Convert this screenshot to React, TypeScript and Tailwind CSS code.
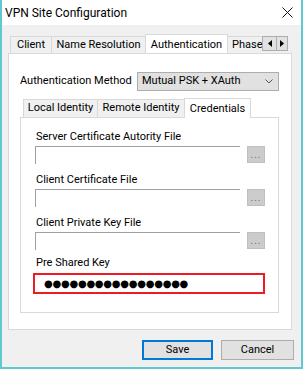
import React from 'react';

const font = { fontFamily: 'Roboto, "Liberation Sans", sans-serif' };

// A file row: label, sunken edit box and the browse button
function FileField({ label }: { label: string }) {
  return (
    <div className="flex flex-col">
      <div className="h-[16px] leading-[16px] pl-[15px] text-black whitespace-nowrap">{label}</div>
      <div className="flex items-start mt-[1px] pl-[14px]">
        <div className="w-[205px] h-[18px] bg-white border-t border-l border-[#a0a0a0]" />
        <div className="ml-[7px] w-[18px] h-[17px] bg-[#cccccc] border border-[#bfbfbf] flex items-center justify-center text-[10px] leading-none text-[#6d6d6d] tracking-[1px]">
          ...
        </div>
      </div>
    </div>
  );
}

export default function App() {
  return (
    <div
      className="w-[303px] h-[369px] flex flex-col border-l-2 border-r-2 border-b-2 border-[#5fc9cf] bg-[#f0f0f0] text-[11px] text-black overflow-hidden whitespace-nowrap"
      style={font}
    >
      {/* Title bar */}
      <div className="h-[25px] bg-white flex items-center justify-between pl-[3px] pr-[8px] shrink-0">
        <span className="text-[12px] leading-none text-black">VPN Site Configuration</span>
        <svg width="11" height="11" viewBox="0 0 11 11">
          <path d="M0.5 0.5 L10.5 10.5 M10.5 0.5 L0.5 10.5" stroke="#111" strokeWidth="1" />
        </svg>
      </div>

      {/* Body */}
      <div className="flex flex-col pt-[8px]">
        {/* Outer tab strip */}
        <div className="flex items-end h-[20px] pl-[8px]">
          <div className="flex items-end w-[252px] overflow-hidden">
            <div className="w-[42px] h-[17px] shrink-0 border border-b-0 border-[#d9d9d9] bg-[#f0f0f0] flex items-center justify-center">Client</div>
            <div className="-ml-px w-[94px] h-[17px] shrink-0 border border-b-0 border-r-0 border-[#d9d9d9] bg-[#f0f0f0] flex items-center justify-center">Name Resolution</div>
            <div className="w-[83px] h-[20px] shrink-0 border border-b-0 border-[#d9d9d9] bg-white relative z-10 -mb-px flex items-start pt-[2px] justify-center">Authentication</div>
            <div className="-ml-px w-[50px] h-[17px] shrink-0 border border-b-0 border-[#d9d9d9] bg-[#f0f0f0] flex items-center pl-[4px]">Phase 1</div>
          </div>
          <div className="flex mb-[2px]">
            <div className="w-[15px] h-[15px] border border-[#adadad] bg-[#e1e1e1] flex items-center justify-center">
              <svg width="4" height="7" viewBox="0 0 4 7"><path d="M4 0 L0 3.5 L4 7 Z" fill="#000" /></svg>
            </div>
            <div className="-ml-px w-[12px] h-[15px] border border-[#adadad] bg-[#e1e1e1] flex items-center justify-center">
              <svg width="4" height="7" viewBox="0 0 4 7"><path d="M0 0 L4 3.5 L0 7 Z" fill="#000" /></svg>
            </div>
          </div>
        </div>

        {/* Outer tab panel */}
        <div className="ml-[6px] w-[284px] h-[277px] bg-white border border-[#d9d9d9] flex flex-col">
          <div className="flex items-center mt-[18px] pl-[11px]">
            <span className="w-[117px]">Authentication Method</span>
            <div className="w-[142px] h-[19px] bg-[#e1e1e1] border border-[#adadad] flex items-center justify-between pl-[4px] pr-[5px]">
              <span>Mutual PSK + XAuth</span>
              <svg width="8" height="5" viewBox="0 0 8 5">
                <path d="M0.5 0.5 L4 4 L7.5 0.5" stroke="#555" strokeWidth="1" fill="none" />
              </svg>
            </div>
          </div>

          {/* Inner tab strip */}
          <div className="flex items-end h-[20px] mt-[6px] pl-[14px]">
            <div className="w-[75px] h-[18px] border border-b-0 border-[#d9d9d9] bg-[#f0f0f0] flex items-center justify-center">Local Identity</div>
            <div className="-ml-px w-[87px] h-[18px] border border-b-0 border-r-0 border-[#d9d9d9] bg-[#f0f0f0] flex items-center justify-center">Remote Identity</div>
            <div className="w-[67px] h-[20px] border border-b-0 border-[#d9d9d9] bg-white relative z-10 -mb-px flex items-start pt-[2px] justify-center">Credentials</div>
          </div>

          {/* Inner tab panel */}
          <div className="ml-[11px] w-[259px] h-[196px] bg-white border border-[#d9d9d9] flex flex-col pt-[11px]">
            <div className="flex flex-col gap-[8px]">
              <FileField label="Server Certificate Autority File" />
              <FileField label="Client Certificate File" />
              <FileField label="Client Private Key File" />
            </div>
            <div className="h-[16px] leading-[16px] pl-[15px] mt-[5px]">Pre Shared Key</div>
            <div className="ml-[12px] mt-[2px] w-[232px] h-[21px] border-2 border-[#ed1c24] bg-white flex items-center pl-[9px]">
              <span className="text-[10px] leading-none tracking-[-0.25px]" style={{ fontFamily: '"DejaVu Sans", sans-serif' }}>
                ●●●●●●●●●●●●●●●●●
              </span>
            </div>
          </div>
        </div>

        {/* Dialog buttons */}
        <div className="flex justify-end gap-[8px] mt-[10px] pr-[7px]">
          <button className="w-[71px] h-[20px] bg-[#e1e1e1] border-2 border-[#0078d7] flex items-center justify-center">Save</button>
          <button className="w-[73px] h-[20px] bg-[#e1e1e1] border border-[#adadad] flex items-center justify-center">Cancel</button>
        </div>
      </div>
    </div>
  );
}
